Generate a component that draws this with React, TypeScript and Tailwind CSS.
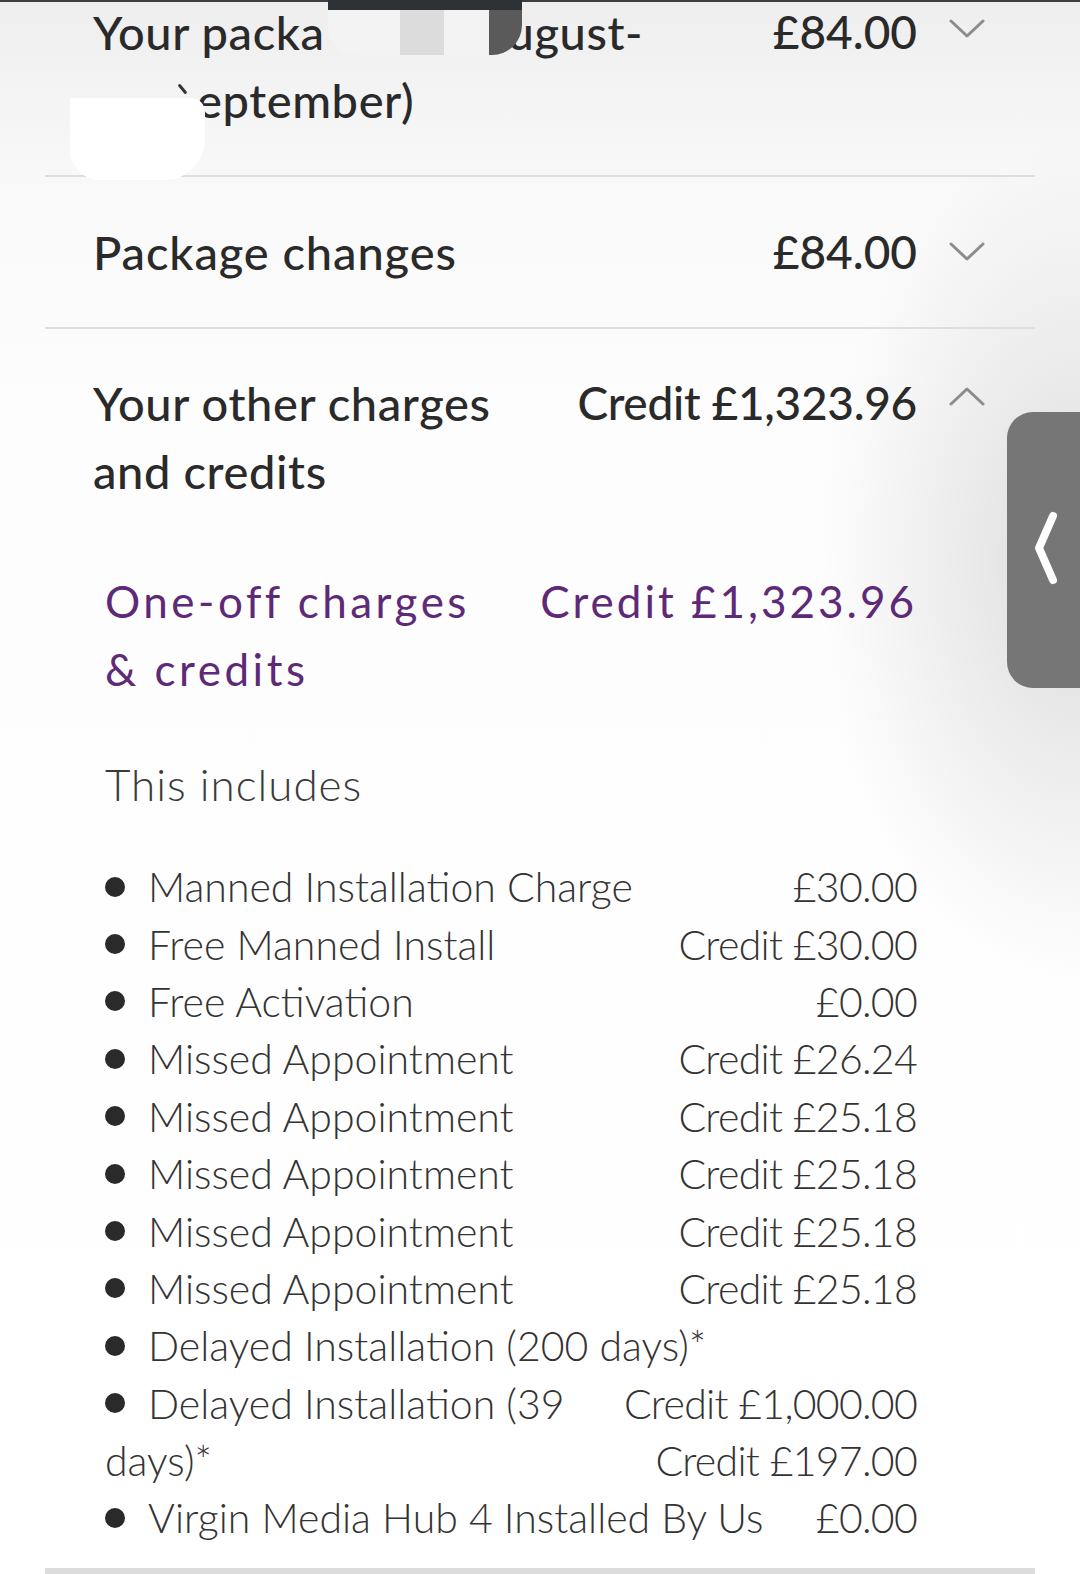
import React from "react";

const FONT = { fontFamily: "Lato, 'Noto Sans', sans-serif" };

function Chevron({ up = false }: { up?: boolean }) {
  return (
    <svg width="36" height="22" viewBox="0 0 36 22" className="shrink-0">
      <path
        d={up ? "M2 19 L18 4 L34 19" : "M2 3 L18 18 L34 3"}
        fill="none"
        stroke="#8c8c8c"
        strokeWidth="3"
        strokeLinecap="round"
        strokeLinejoin="round"
      />
    </svg>
  );
}

type Row = { bullet: boolean; label: string; amount?: string };

const rows: Row[] = [
  { bullet: true, label: "Manned Installation Charge", amount: "£30.00" },
  { bullet: true, label: "Free Manned Install", amount: "Credit £30.00" },
  { bullet: true, label: "Free Activation", amount: "£0.00" },
  { bullet: true, label: "Missed Appointment", amount: "Credit £26.24" },
  { bullet: true, label: "Missed Appointment", amount: "Credit £25.18" },
  { bullet: true, label: "Missed Appointment", amount: "Credit £25.18" },
  { bullet: true, label: "Missed Appointment", amount: "Credit £25.18" },
  { bullet: true, label: "Missed Appointment", amount: "Credit £25.18" },
  { bullet: true, label: "Delayed Installation (200 days)*" },
  { bullet: true, label: "Delayed Installation (39", amount: "Credit £1,000.00" },
  { bullet: false, label: "days)*", amount: "Credit £197.00" },
  { bullet: true, label: "Virgin Media Hub 4 Installed By Us", amount: "£0.00" },
];

export default function App() {
  return (
    <div
      className="relative w-[1080px] h-[1574px] overflow-hidden [background-image:radial-gradient(ellipse_260px_420px_at_1080px_560px,#dcdcdc,rgba(255,255,255,0)),linear-gradient(180deg,#eeeeee_0px,#f8f8f8_170px,#fdfdfd_400px,#ffffff_100%)]"
      style={FONT}
    >
      <div className="mx-[45px] w-[990px]">
        {/* Row 1 */}
        <div className="flex justify-between pl-[48px] pr-[50px] pb-[41px] mt-[-2px] border-b-[2px] border-[#dedede]">
          <div className="text-[47px] leading-[68px] tracking-[0.6px] font-medium text-[#2a2a2a]">
            <div className="flex">
              <span>Your packa</span>
              <span className="inline-block w-[183px]" />
              <span>ugust-</span>
            </div>
            <div className="pl-[104px]">eptember)</div>
          </div>
          <div className="flex items-start gap-[32px] h-[68px]">
            <span className="text-[46px] leading-[68px] font-medium text-[#2a2a2a]">£84.00</span>
            <div className="mt-[20px]"><Chevron /></div>
          </div>
        </div>

        {/* Row 2 */}
        <div className="flex justify-between items-center pl-[48px] pr-[50px] py-[41px] border-b-[2px] border-[#dedede]">
          <div className="text-[47px] leading-[68px] tracking-[0.9px] font-medium text-[#2a2a2a]">Package changes</div>
          <div className="flex items-center gap-[32px]">
            <span className="text-[46px] leading-[68px] font-medium text-[#2a2a2a]">£84.00</span>
            <Chevron />
          </div>
        </div>

        {/* Row 3 */}
        <div className="pl-[48px] pr-[50px] pt-[40px]">
          <div className="flex justify-between items-start">
            <div className="text-[47px] leading-[68px] tracking-[0.6px] font-medium text-[#2a2a2a]">
              Your other charges
              <br />
              and credits
            </div>
            <div className="flex items-center gap-[32px] h-[68px]">
              <span className="text-[46px] leading-[68px] tracking-[-0.3px] font-medium text-[#2a2a2a]">Credit £1,323.96</span>
              <div className="mt-[-14px]"><Chevron up /></div>
            </div>
          </div>

          <div className="pl-[12px] pr-[68px]">
            <div className="flex justify-between items-start mt-[62px]">
              <div className="text-[44px] leading-[68px] tracking-[3.5px] text-[#5e2a78]">
                One-off charges
                <br />
                &amp; credits
              </div>
              <div className="text-[44px] leading-[68px] tracking-[3px] text-[#5e2a78]">Credit £1,323.96</div>
            </div>

            <div className="mt-[47px] text-[44px] leading-[68px] tracking-[1px] font-light text-[#3a3a3a]">This includes</div>

            <div className="mt-[40px]">
              {rows.map((r, i) => (
                <div key={i} className="flex justify-between items-center h-[57.4px] text-[41px] leading-[57px] text-[#333333] font-light">
                  <div className="flex items-center">
                    {r.bullet && <span className="inline-block w-[20px] h-[20px] rounded-full bg-[#2a2a2a] mr-[23px]" />}
                    <span>{r.label}</span>
                  </div>
                  {r.amount && <span className="tracking-[-0.7px]">{r.amount}</span>}
                </div>
              ))}
            </div>
          </div>
        </div>

        <div className="mt-[21px] h-[12px] bg-[#dcdcdc]" />
      </div>

      {/* top edge line */}
      <div className="absolute left-0 top-0 w-full h-[2px] bg-[#3e3e3e]" />

      {/* redaction blob top */}
      <div className="absolute left-[328px] top-0 w-[194px] h-[55px] overflow-hidden rounded-bl-[28px] rounded-br-[30px] flex flex-col">
        <div className="h-[10px] bg-[#2e3236]" />
        <div className="flex flex-1">
          <div className="w-[72px] bg-[#f3f3f3]" />
          <div className="w-[44px] bg-[#dcdcdc]" />
          <div className="w-[45px] bg-[#f3f3f3]" />
          <div className="flex-1 bg-[#5a5a5a]" />
        </div>
      </div>

      {/* redaction blob left */}
      <div className="absolute left-[70px] top-[98px] w-[135px] h-[82px] bg-white rounded-br-[40px] rounded-bl-[30px] rounded-tr-[14px]" />
      <div className="absolute left-[181px] top-[83px] w-[3px] h-[12px] bg-[#333] rotate-[-40deg] rounded" />

      {/* side tab */}
      <div className="absolute left-[1007px] top-[412px] w-[90px] h-[276px] rounded-l-[26px] bg-[#767676]">
        <svg width="40" height="90" viewBox="0 0 40 90" className="absolute left-[18px] top-[96px]">
          <path d="M28 8 L14 40 L28 72" fill="none" stroke="#ffffff" strokeWidth="8" strokeLinecap="round" strokeLinejoin="round" />
        </svg>
      </div>
    </div>
  );
}
